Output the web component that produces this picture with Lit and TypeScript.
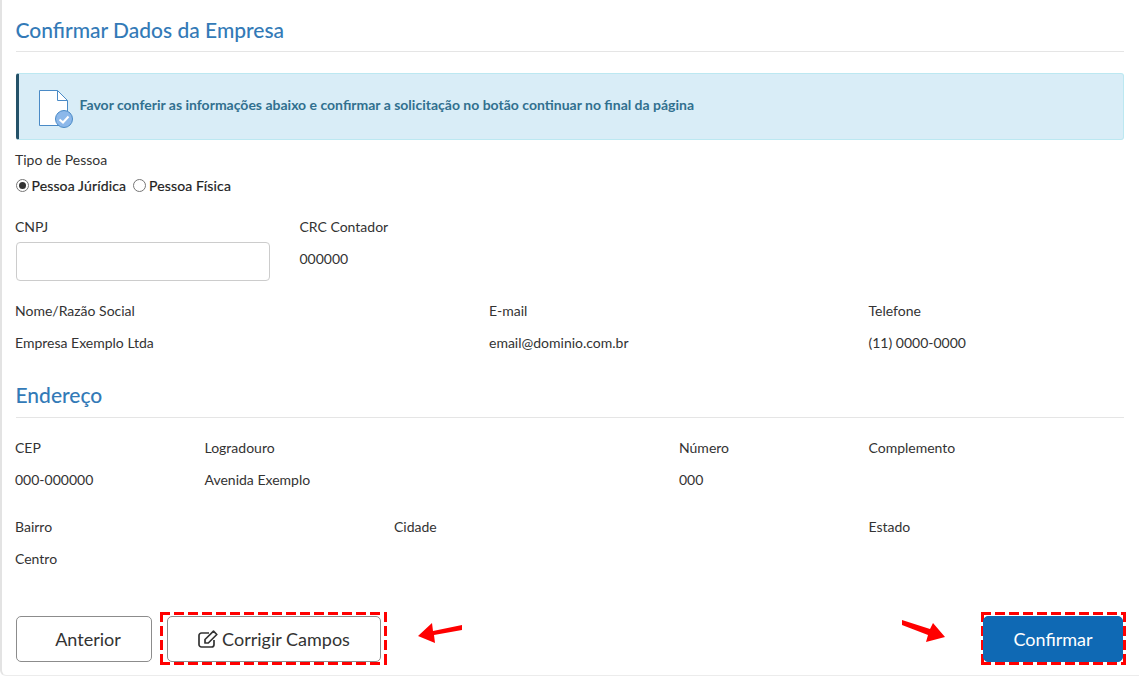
import { LitElement, html, css } from "lit";
import { customElement } from "lit/decorators.js";

const field = (label: string, value: string, cls = "") => html`
  <div class="field ${cls}"><div class="lbl">${label}</div><div class="val">${value}</div></div>`;

@customElement("app-root")
export class AppRoot extends LitElement {
  static styles = css`
    :host { display: block; width: 1139px; height: 677px; overflow: hidden; background: #fff; font-family: "Lato", sans-serif; font-size: 14px; color: #333; }
    * { box-sizing: border-box; }
    .page { height: 676px; padding: 0 15px 0 13.5px; border-left: 2px solid #e3e3e3; border-bottom: 1px solid #ececec; border-bottom-left-radius: 6px; display: flex; flex-direction: column; }
    h2 { margin: 0; font-size: 21px; font-weight: 500; color: #337ab7; line-height: 24px; padding: 18px 0 9px; border-bottom: 1px solid #e5e5e5; }
    .alert { height: 67px; margin-top: 21px; background: #d9edf7; border: 1px solid #bce8f1; border-left: 3px solid #245269; border-radius: 3px; display: flex; align-items: center; gap: 6px; padding-left: 19px; color: #31708f; font-weight: 700; font-size: 14px; }
    .alert svg { display: block; flex: none; margin-top: 4px; }
    .alert span { padding-bottom: 5px; }
    .type { margin-top: 10px; }
    .lbl { line-height: 20px; }
    .type .lbl, .cnpj .lbl, .row .field { margin-left: -0.5px; }
    .radios { display: flex; align-items: center; height: 20px; margin-top: 5px; color: #222; letter-spacing: 0.14px; -webkit-text-stroke: 0.2px #222; }
    .radio { width: 13px; height: 13px; border-radius: 50%; border: 1px solid #767676; background: #fff; margin-right: 3px; position: relative; flex: none; }
    .radio.on::after { content: ""; position: absolute; inset: 2px; border-radius: 50%; background: #333; }
    .radios span { margin-right: 7px; }
    .row1 { display: flex; margin-top: 22px; height: 63px; }
    .cnpj { width: 284px; }
    .input { width: 254px; height: 39px; margin: 5px 0 0 0.5px; border: 1px solid #ccc; border-radius: 4px; background: #fff; }
    .val { line-height: 20px; margin-top: 12px; }
    .row { display: grid; }
    .r2 { margin-top: 21px; grid-template-columns: 474px 379.5px 1fr; }
    h2.sec { margin-top: 28px; padding: 0 0 9px; line-height: 28px; height: 37px; }
    .r3 { margin-top: 20px; grid-template-columns: 189.5px 474.5px 189.5px 1fr; }
    .r4 { margin-top: 27px; grid-template-columns: 379px 474.5px 1fr; }
    .actions { display: flex; align-items: flex-start; margin-top: 43px; padding-left: 0.5px; }
    .btn { height: 46px; border: 1px solid #8c8c8c; border-radius: 5px; background: #fff; font: 18px "Lato", sans-serif; color: #333; display: flex; align-items: center; justify-content: center; gap: 4px; padding: 0; }
    .prev { width: 136px; margin: 4px 8px 0 0; padding-left: 8px; }
    .dash {
      display: block; flex: none;
      background:
        repeating-linear-gradient(90deg, #f00 0 10px, transparent 10px 14px) 0 0 / 100% 3px no-repeat,
        repeating-linear-gradient(90deg, #f00 0 10px, transparent 10px 14px) 0 100% / 100% 3px no-repeat,
        repeating-linear-gradient(180deg, #f00 0 10px, transparent 10px 14px) 0 0 / 3px 100% no-repeat,
        repeating-linear-gradient(180deg, #f00 0 10px, transparent 10px 14px) 100% 0 / 3px 100% no-repeat;
    }
    .d1 { padding: 4px 6px 3px 7px; }
    .d2 { padding: 4px 3px 3px 2px; margin-right: -2px; }
    .fix { width: 214px; }
    .arrow { display: block; flex: none; }
    .a1 { margin: 11px 0 0 31px; }
    .a2 { margin: 8px 35px 0 auto; }
    .ok { width: 140px; background: #0f69b4; border-color: #0f69b4; color: #fff; }
  `;
  render() {
    return html`<div class="page">
      <h2>Confirmar Dados da Empresa</h2>
      <div class="alert">
        <svg width="36" height="40" viewBox="0 0 36 40" fill="none">
          <path d="M1.5 1.5H19.5L29.5 11.5V36.5H1.5Z" fill="#fff" stroke="#4a8ac6"/>
          <path d="M19.5 1.5V11.5H29.5" stroke="#4a8ac6"/>
          <circle cx="26" cy="30" r="8.5" fill="#8cb8ea" stroke="#4a8ac6"/>
          <path d="M21.5 30.5L25 33.5L30.5 27.5" stroke="#fff" stroke-width="2"/>
        </svg>
        <span>Favor conferir as informações abaixo e confirmar a solicitação no botão continuar no final da página</span>
      </div>
      <div class="type">
        <div class="lbl">Tipo de Pessoa</div>
        <div class="radios"><i class="radio on"></i><span>Pessoa Júrídica</span><i class="radio"></i><span>Pessoa Física</span></div>
      </div>
      <div class="row1">
        <div class="cnpj"><div class="lbl">CNPJ</div><div class="input"></div></div>
        ${field("CRC Contador", "000000")}
      </div>
      <div class="row r2">
        ${field("Nome/Razão Social", "Empresa Exemplo Ltda")}
        ${field("E-mail", "email@dominio.com.br")}
        ${field("Telefone", "(11) 0000-0000")}
      </div>
      <h2 class="sec">Endereço</h2>
      <div class="row r3">
        ${field("CEP", "000-000000")}
        ${field("Logradouro", "Avenida Exemplo")}
        ${field("Número", "000")}
        ${field("Complemento", "")}
      </div>
      <div class="row r4">
        ${field("Bairro", "Centro")}
        ${field("Cidade", "")}
        ${field("Estado", "")}
      </div>
      <div class="actions">
        <button class="btn prev">Anterior</button>
        <span class="dash d1"><button class="btn fix">
          <svg width="20" height="18" viewBox="0 0 20 18" fill="none" stroke="#333" stroke-width="1.7">
            <path d="M16 10V14.5a2.5 2.5 0 0 1-2.5 2.5H3.5a2.5 2.5 0 0 1-2.5-2.5V5.5a2.5 2.5 0 0 1 2.5-2.5H11"/>
            <path d="M7 9.5L15.5 1.2L18.8 4.5L10.3 13L7 13Z" stroke-linejoin="round"/>
          </svg>
          Corrigir Campos
        </button></span>
        <svg class="arrow a1" width="45" height="21" viewBox="0 0 45 21"><path d="M0 13L14 0L15 8L44 2V7L16 12L17 20Z" fill="#f00"/></svg>
        <svg class="arrow a2" width="44" height="23" viewBox="0 0 44 23"><path d="M0 0L28 9L31 3L43 17L24 22L26 15L0 5Z" fill="#f00"/></svg>
        <span class="dash d2"><button class="btn ok">Confirmar</button></span>
      </div>
    </div>`;
  }
}
